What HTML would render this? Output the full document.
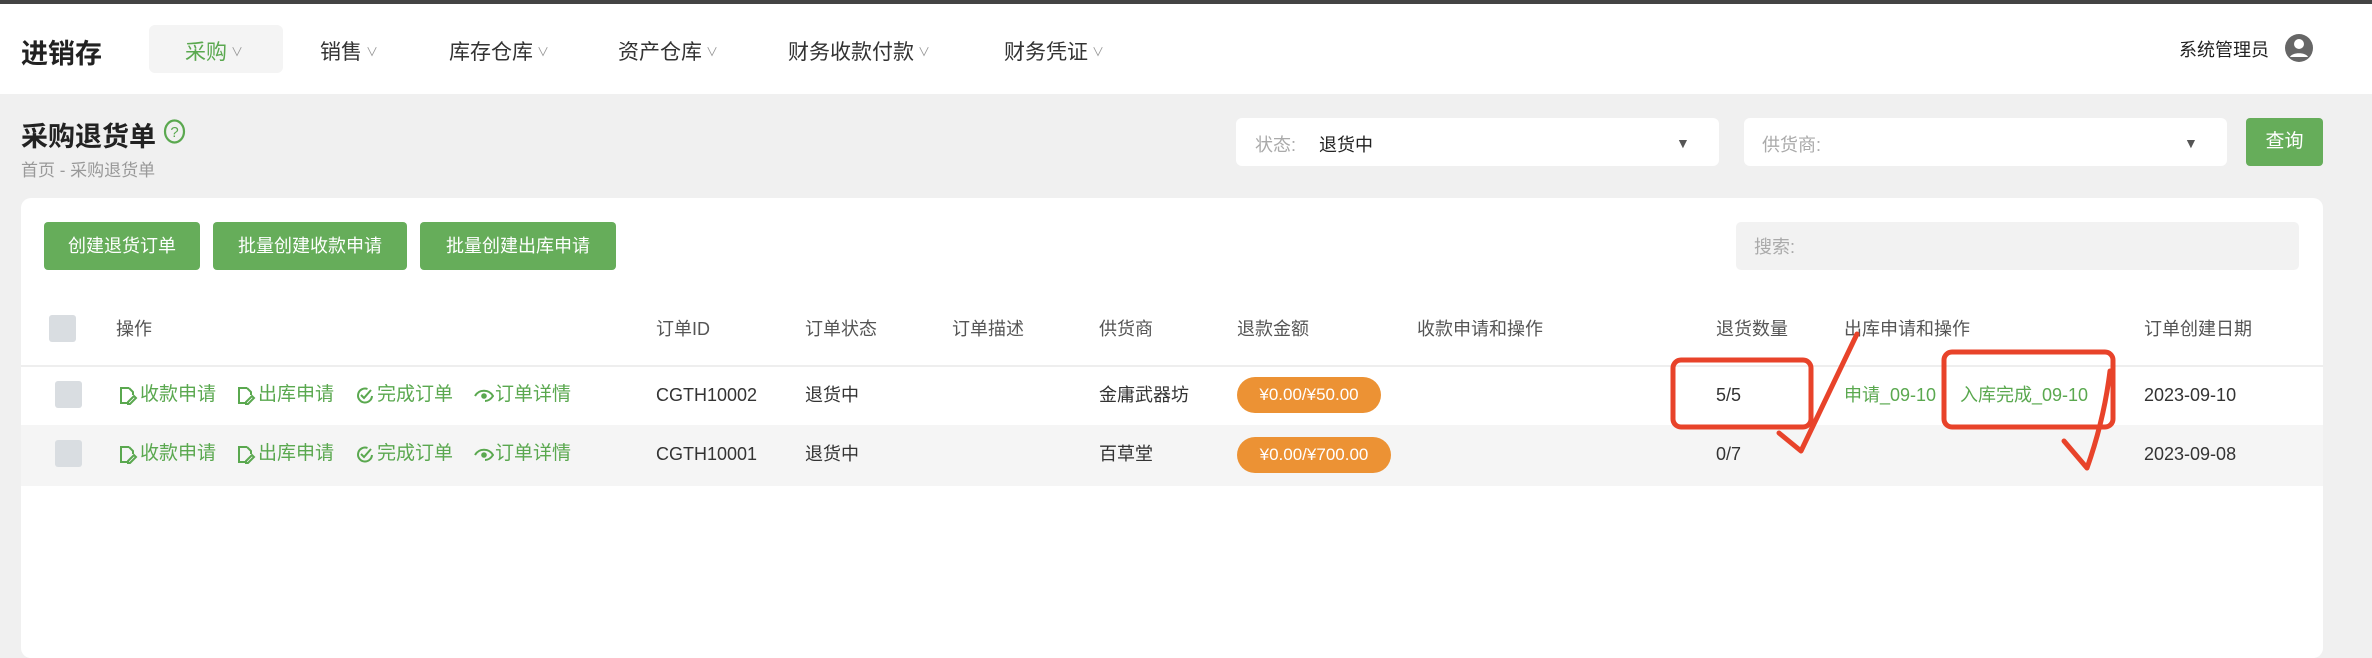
<!DOCTYPE html>
<html><head><meta charset="utf-8"><style>
*{margin:0;padding:0;box-sizing:border-box}
body{width:2372px;height:626px;overflow:hidden;background:#f0f0f0;font-family:"Liberation Sans","Noto Sans CJK SC",sans-serif;position:relative;color:#333}
.a{position:absolute;white-space:nowrap}
.top{left:0;top:0;width:2372px;height:4px;background:#444}
.hdr{left:0;top:4px;width:2372px;height:90px;background:#fff}
.nav{font-size:21px;color:#333;top:36px}
.nav i{font-style:normal;font-size:12px;color:#999;margin-left:4px;vertical-align:3px}
.btn{background:#66ad5a;color:#fff;font-size:18px;border-radius:4px;height:48px;line-height:48px;text-align:center}
.sel{background:#fff;border-radius:6px;height:48px;top:118px}
.th{font-size:18px;color:#555;top:317px;line-height:24px}
.td{font-size:18px;color:#333;line-height:24px}
.g{color:#5aa84f}
.cb{width:27px;height:27px;background:#d9dde1;border-radius:3px}
.badge{background:#ec9234;color:#fff;font-size:17px;border-radius:18px;height:36px;line-height:36px;text-align:center}
.act{font-size:19px;color:#5aa84f;line-height:24px}
.act svg{position:absolute;left:0;top:3px}
.act span{margin-left:21px}
</style></head><body>
<div class="a top"></div>
<div class="a hdr"></div>
<div class="a" style="left:21px;top:32px;font-size:27px;font-weight:bold;color:#222">进销存</div>
<div class="a" style="left:149px;top:25px;width:134px;height:48px;background:#f4f4f4;border-radius:6px"></div>
<div class="a nav" style="left:185px;color:#5aa84f">采购<i>∨</i></div>
<div class="a nav" style="left:320px">销售<i>∨</i></div>
<div class="a nav" style="left:449px">库存仓库<i>∨</i></div>
<div class="a nav" style="left:618px">资产仓库<i>∨</i></div>
<div class="a nav" style="left:788px">财务收款付款<i>∨</i></div>
<div class="a nav" style="left:1004px">财务凭证<i>∨</i></div>
<div class="a" style="left:2179px;top:36px;font-size:18px;color:#222">系统管理员</div>
<svg class="a" style="left:2284px;top:33px" width="30" height="30" viewBox="0 0 30 30"><circle cx="15" cy="15" r="14" fill="#666"/><circle cx="15" cy="11" r="5" fill="#fff"/><path d="M6 24c2-5 16-5 18 0" fill="#fff"/></svg>

<div class="a" style="left:21px;top:115px;font-size:27px;font-weight:bold;color:#222">采购退货单</div>
<svg class="a" style="left:163px;top:119px" width="23" height="25" viewBox="0 0 23 25"><ellipse cx="11.5" cy="12.5" rx="9.5" ry="11" fill="none" stroke="#5aa84f" stroke-width="2.2"/><text x="11.5" y="18" font-size="15" text-anchor="middle" fill="#5aa84f" font-family="Liberation Sans">?</text></svg>
<div class="a" style="left:21px;top:156px;font-size:17px;color:#999">首页 - 采购退货单</div>

<div class="a sel" style="left:1236px;width:483px"></div>
<div class="a" style="left:1255px;top:131px;font-size:18px;color:#aaa">状态:</div>
<div class="a" style="left:1319px;top:131px;font-size:18px;color:#222">退货中</div>
<div class="a" style="left:1676px;top:135px;font-size:14px;color:#555">▼</div>
<div class="a sel" style="left:1744px;width:483px"></div>
<div class="a" style="left:1762px;top:131px;font-size:18px;color:#aaa">供货商:</div>
<div class="a" style="left:2184px;top:135px;font-size:14px;color:#555">▼</div>
<div class="a btn" style="left:2246px;top:118px;width:77px;font-size:19px">查询</div>

<div class="a" style="left:21px;top:198px;width:2302px;height:460px;background:#fff;border-radius:10px"></div>
<div class="a btn" style="left:44px;top:222px;width:156px">创建退货订单</div>
<div class="a btn" style="left:213px;top:222px;width:194px">批量创建收款申请</div>
<div class="a btn" style="left:420px;top:222px;width:196px">批量创建出库申请</div>
<div class="a" style="left:1736px;top:222px;width:563px;height:48px;background:#f2f2f2;border-radius:5px"></div>
<div class="a" style="left:1754px;top:233px;font-size:18px;color:#aaa">搜索:</div>

<div class="a cb" style="left:49px;top:315px"></div>
<div class="a th" style="left:116px">操作</div>
<div class="a th" style="left:656px">订单ID</div>
<div class="a th" style="left:805px">订单状态</div>
<div class="a th" style="left:952px">订单描述</div>
<div class="a th" style="left:1099px">供货商</div>
<div class="a th" style="left:1237px">退款金额</div>
<div class="a th" style="left:1417px">收款申请和操作</div>
<div class="a th" style="left:1716px">退货数量</div>
<div class="a th" style="left:1844px">出库申请和操作</div>
<div class="a th" style="left:2144px">订单创建日期</div>
<div class="a" style="left:21px;top:365px;width:2302px;height:2px;background:#eee"></div>

<div class="a" style="left:21px;top:425px;width:2302px;height:61px;background:#f5f5f5"></div>

<div class="a cb" style="left:55px;top:381px"></div>
<div class="a cb" style="left:55px;top:440px"></div>

<!-- row actions -->
<div class="a act" style="left:119px;top:383px"><svg width="20" height="19" viewBox="0 0 20 19"><path d="M10 2H2v15h6M10 2l4 4v3M9 16l6-6 2 2-6 6H9z" fill="none" stroke="#5aa84f" stroke-width="2"/></svg><span>收款申请</span></div>
<div class="a act" style="left:237px;top:383px"><svg width="20" height="19" viewBox="0 0 20 19"><path d="M10 2H2v15h6M10 2l4 4v3M9 16l6-6 2 2-6 6H9z" fill="none" stroke="#5aa84f" stroke-width="2"/></svg><span>出库申请</span></div>
<div class="a act" style="left:356px;top:383px"><svg width="20" height="19" viewBox="0 0 20 19"><path d="M16 10A7 7 0 1 1 11.5 3" fill="none" stroke="#5aa84f" stroke-width="2"/><path d="M5 9l3 3 7-8" fill="none" stroke="#5aa84f" stroke-width="2"/></svg><span>完成订单</span></div>
<div class="a act" style="left:474px;top:383px"><svg width="20" height="19" viewBox="0 0 20 19"><path d="M1 10c4-7 14-7 18 0c-2 3-5 5-8 5" fill="none" stroke="#5aa84f" stroke-width="2"/><circle cx="10" cy="10" r="2.8" fill="#5aa84f"/></svg><span>订单详情</span></div>

<div class="a act" style="left:119px;top:442px"><svg width="20" height="19" viewBox="0 0 20 19"><path d="M10 2H2v15h6M10 2l4 4v3M9 16l6-6 2 2-6 6H9z" fill="none" stroke="#5aa84f" stroke-width="2"/></svg><span>收款申请</span></div>
<div class="a act" style="left:237px;top:442px"><svg width="20" height="19" viewBox="0 0 20 19"><path d="M10 2H2v15h6M10 2l4 4v3M9 16l6-6 2 2-6 6H9z" fill="none" stroke="#5aa84f" stroke-width="2"/></svg><span>出库申请</span></div>
<div class="a act" style="left:356px;top:442px"><svg width="20" height="19" viewBox="0 0 20 19"><path d="M16 10A7 7 0 1 1 11.5 3" fill="none" stroke="#5aa84f" stroke-width="2"/><path d="M5 9l3 3 7-8" fill="none" stroke="#5aa84f" stroke-width="2"/></svg><span>完成订单</span></div>
<div class="a act" style="left:474px;top:442px"><svg width="20" height="19" viewBox="0 0 20 19"><path d="M1 10c4-7 14-7 18 0c-2 3-5 5-8 5" fill="none" stroke="#5aa84f" stroke-width="2"/><circle cx="10" cy="10" r="2.8" fill="#5aa84f"/></svg><span>订单详情</span></div>

<div class="a td" style="left:656px;top:383px">CGTH10002</div>
<div class="a td" style="left:805px;top:383px">退货中</div>
<div class="a td" style="left:1099px;top:383px">金庸武器坊</div>
<div class="a badge" style="left:1237px;top:377px;width:144px">¥0.00/¥50.00</div>
<div class="a td" style="left:1716px;top:383px">5/5</div>
<div class="a td g" style="left:1844px;top:383px">申请_09-10</div>
<div class="a td g" style="left:1960px;top:383px">入库完成_09-10</div>
<div class="a td" style="left:2144px;top:383px">2023-09-10</div>

<div class="a td" style="left:656px;top:442px">CGTH10001</div>
<div class="a td" style="left:805px;top:442px">退货中</div>
<div class="a td" style="left:1099px;top:442px">百草堂</div>
<div class="a badge" style="left:1237px;top:437px;width:154px">¥0.00/¥700.00</div>
<div class="a td" style="left:1716px;top:442px">0/7</div>
<div class="a td" style="left:2144px;top:442px">2023-09-08</div>

<svg class="a" style="left:0;top:0" width="2372" height="626" viewBox="0 0 2372 626">
<g fill="none" stroke="#e8432a" stroke-width="5" stroke-linecap="round" stroke-linejoin="round">
<rect x="1673" y="360" width="138" height="67" rx="8"/>
<rect x="1944" y="352" width="169" height="75" rx="8"/>
<path d="M1857 334L1801 451L1779 433"/>
<path d="M2110 371Q2104 420 2087 468L2064 441"/>
</g></svg>
</body></html>
